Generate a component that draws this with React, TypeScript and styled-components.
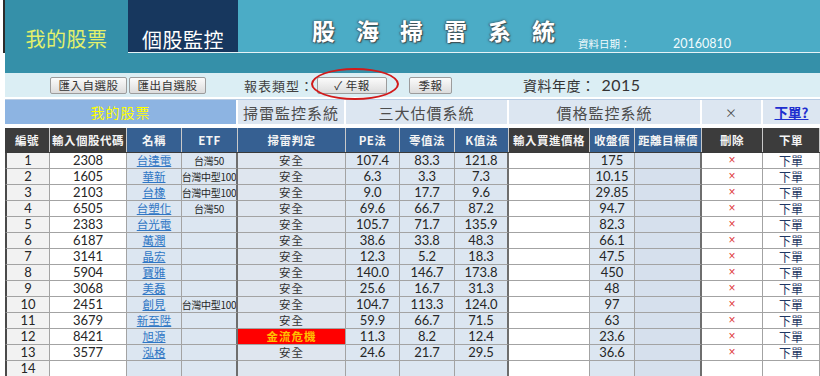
import styled, { createGlobalStyle } from "styled-components";

const COLS = "45px 77px 55px 56px 108px 54px 55px 54px 81px 45px 67px 61px 57px";

const GlobalStyle = createGlobalStyle`
  body {
    margin: 0;
    background: #ffffff;
    font-family: "Noto Sans CJK TC", "Noto Sans", sans-serif;
  }
`;

type Stock = {
  no: number;
  code: string;
  name: string;
  etf: string;
  verdict: string;
  pe: string;
  zero: string;
  k: string;
  close: string;
};

const stocks: Stock[] = [
  { no: 1, code: "2308", name: "台達電", etf: "台灣50", verdict: "安全", pe: "107.4", zero: "83.3", k: "121.8", close: "175" },
  { no: 2, code: "1605", name: "華新", etf: "台灣中型100", verdict: "安全", pe: "6.3", zero: "3.3", k: "7.3", close: "10.15" },
  { no: 3, code: "2103", name: "台橡", etf: "台灣中型100", verdict: "安全", pe: "9.0", zero: "17.7", k: "9.6", close: "29.85" },
  { no: 4, code: "6505", name: "台塑化", etf: "台灣50", verdict: "安全", pe: "69.6", zero: "66.7", k: "87.2", close: "94.7" },
  { no: 5, code: "2383", name: "台光電", etf: "", verdict: "安全", pe: "105.7", zero: "71.7", k: "135.9", close: "82.3" },
  { no: 6, code: "6187", name: "萬潤", etf: "", verdict: "安全", pe: "38.6", zero: "33.8", k: "48.3", close: "66.1" },
  { no: 7, code: "3141", name: "晶宏", etf: "", verdict: "安全", pe: "12.3", zero: "5.2", k: "18.3", close: "47.5" },
  { no: 8, code: "5904", name: "寶雅", etf: "", verdict: "安全", pe: "140.0", zero: "146.7", k: "173.8", close: "450" },
  { no: 9, code: "3068", name: "美磊", etf: "", verdict: "安全", pe: "25.6", zero: "16.7", k: "31.3", close: "48" },
  { no: 10, code: "2451", name: "創見", etf: "台灣中型100", verdict: "安全", pe: "104.7", zero: "113.3", k: "124.0", close: "97" },
  { no: 11, code: "3679", name: "新至陞", etf: "", verdict: "安全", pe: "59.9", zero: "66.7", k: "71.5", close: "63" },
  { no: 12, code: "8421", name: "旭源", etf: "", verdict: "金流危機", pe: "11.3", zero: "8.2", k: "12.4", close: "23.6" },
  { no: 13, code: "3577", name: "泓格", etf: "", verdict: "安全", pe: "24.6", zero: "21.7", k: "29.5", close: "36.6" },
];

const headers: { label: string; dark?: boolean }[] = [
  { label: "編號", dark: true },
  { label: "輸入個股代碼", dark: true },
  { label: "名稱" },
  { label: "ETF" },
  { label: "掃雷判定" },
  { label: "PE法" },
  { label: "零值法" },
  { label: "K值法" },
  { label: "輸入買進價格", dark: true },
  { label: "收盤價" },
  { label: "距離目標價" },
  { label: "刪除", dark: true },
  { label: "下單", dark: true },
];

const colBg = [
  "#f2f2f2", "#ffffff", "#dce6f1", "#dce6f1", "#dfe6ef", "#dce6f1", "#dce6f1",
  "#dce6f1", "#ffffff", "#dce6f1", "#d6e0ed", "#ffffff", "#ffffff",
];
const thickAfter = [3, 7, 10];

const TITLE = ["股", "海", "掃", "雷", "系", "統"];

export default function App() {
  const rows = [...stocks, null];
  return (
    <Page>
      <GlobalStyle />
      <TopBar>
        <ActiveTab>我的股票</ActiveTab>
        <NavTab>個股監控</NavTab>
        <TitleArea>
          <Title>
            {TITLE.map((c) => (
              <span key={c}>{c}</span>
            ))}
          </Title>
          <DateInfo>
            <DateLabel>資料日期：</DateLabel>
            <DateValue>20160810</DateValue>
          </DateInfo>
        </TitleArea>
      </TopBar>
      <Strip />
      <Toolbar>
        <ToolButton $w={77}>匯入自選股</ToolButton>
        <ToolButton $w={77} style={{ marginLeft: 2 }}>匯出自選股</ToolButton>
        <ToolLabel>報表類型：</ToolLabel>
        <Circled>
          <ToolButton $w={70}>✓ 年報</ToolButton>
          <Ellipse />
        </Circled>
        <ToolButton $w={43} style={{ marginLeft: 22 }}>季報</ToolButton>
        <YearInfo>
          資料年度：<YearValue>2015</YearValue>
        </YearInfo>
      </Toolbar>

      <GroupRow>
        <GroupCell $span={4} $main>我的股票</GroupCell>
        <GroupCell $span={1}>掃雷監控系統</GroupCell>
        <GroupCell $span={3}>三大估價系統</GroupCell>
        <GroupCell $span={3}>價格監控系統</GroupCell>
        <GroupCell $span={1}><Cross>×</Cross></GroupCell>
        <GroupCell $span={1} $last><OrderHelp>下單?</OrderHelp></GroupCell>
      </GroupRow>

      <HeadRow>
        {headers.map((h) => (
          <HeadCell key={h.label} $dark={h.dark}>{h.label}</HeadCell>
        ))}
      </HeadRow>

      <Body>
        {rows.map((s, i) => {
          const values = s
            ? [
                String(s.no), s.code, s.name, s.etf, s.verdict, s.pe, s.zero, s.k,
                "", s.close, "", "×", "下單",
              ]
            : ["14", "", "", "", "", "", "", "", "", "", "", "", ""];
          return (
            <Row key={i}>
              {values.map((v, c) => {
                const danger = c === 4 && v === "金流危機";
                return (
                  <Cell
                    key={c}
                    $bg={danger ? "#ff0000" : colBg[c]}
                    $thick={thickAfter.includes(c)}
                    $first={c === 0}
                  >
                    {c === 2 && v ? <NameLink>{v}</NameLink> : null}
                    {c === 3 && v ? <EtfText>{v}</EtfText> : null}
                    {c === 4 && v ? danger ? <DangerText>{v}</DangerText> : <CjkText>{v}</CjkText> : null}
                    {c === 11 && v ? <DelMark>{v}</DelMark> : null}
                    {c === 12 && v ? <OrderText>{v}</OrderText> : null}
                    {[0, 1, 5, 6, 7, 9].includes(c) ? v : null}
                  </Cell>
                );
              })}
            </Row>
          );
        })}
      </Body>
    </Page>
  );
}

const Page = styled.div`
  width: 820px;
  height: 376px;
  padding-left: 5px;
  box-sizing: border-box;
  overflow: hidden;
`;

const TopBar = styled.div`
  display: flex;
  height: 53px;
  box-shadow: -2px 0 0 #2b2b2b;
`;

const ActiveTab = styled.div`
  width: 123px;
  background: #3590a9;
  color: #e3f06b;
  font-size: 20px;
  line-height: 1;
  letter-spacing: 0.5px;
  display: flex;
  align-items: flex-end;
  justify-content: center;
  padding-bottom: 4px;
  box-sizing: border-box;
`;

const NavTab = styled.div`
  width: 110px;
  background: #17375e;
  border-bottom: 1px solid #e6f3f7;
  color: #ffffff;
  font-size: 20px;
  line-height: 1;
  letter-spacing: 0.5px;
  display: flex;
  align-items: flex-end;
  justify-content: center;
  padding-bottom: 2px;
  box-sizing: border-box;
`;

const TitleArea = styled.div`
  flex: 1;
  display: flex;
  background: #4bacc6;
  border-bottom: 1px solid #e6f3f7;
  padding-left: 74px;
`;

const Title = styled.div`
  display: flex;
  gap: 21px;
  margin-top: 19px;
  height: 24px;
  font-size: 23px;
  font-weight: 700;
  line-height: 1;
  color: #ffffff;
  text-shadow: 1px 1px 1px #3d4f55, -1px 0 1px #4e6a72, 0 0 3px #37545c;
`;

const DateInfo = styled.div`
  align-self: flex-end;
  display: flex;
  align-items: baseline;
  margin-left: 23px;
  margin-bottom: 1px;
  color: #f2fbfd;
`;

const DateLabel = styled.span`
  font-size: 10.5px;
  width: 95px;
`;

const DateValue = styled.span`
  font-family: Lato, "Noto Sans", sans-serif;
  font-size: 12.5px;
`;

const Strip = styled.div`
  height: 20px;
  background: #3590a9;
`;

const Toolbar = styled.div`
  display: flex;
  align-items: center;
  height: 24px;
  background: #dbeef4;
  padding-left: 45px;
`;

const ToolButton = styled.button<{ $w: number }>`
  width: ${(p) => p.$w}px;
  height: 17px;
  padding: 0;
  border: 1px solid #9c9c9c;
  border-radius: 2px;
  background: linear-gradient(#fbfbfb, #dcdcdc);
  color: #333333;
  font-family: "Noto Sans CJK TC", sans-serif;
  font-size: 11.5px;
  line-height: 15px;
  letter-spacing: 0.5px;
`;

const ToolLabel = styled.span`
  width: 73px;
  margin-left: 38px;
  font-size: 13px;
  letter-spacing: 1px;
  color: #404040;
`;

const Circled = styled.div`
  position: relative;
  display: flex;
`;

const Ellipse = styled.div`
  position: absolute;
  left: -6px;
  top: -9px;
  width: 84px;
  height: 28px;
  border: 2px solid #d21a1a;
  border-radius: 50%;
  pointer-events: none;
`;

const YearInfo = styled.span`
  margin-left: 71px;
  font-size: 14px;
  letter-spacing: 0.5px;
  color: #333333;
`;

const YearValue = styled.span`
  margin-left: 6px;
  font-family: Lato, sans-serif;
  font-size: 16px;
`;

const GroupRow = styled.div`
  display: grid;
  grid-template-columns: ${COLS};
  height: 24px;
  margin-top: 2px;
  border-top: 1px solid #b8cce4;
`;

const GroupCell = styled.div<{ $span: number; $main?: boolean; $last?: boolean }>`
  grid-column: span ${(p) => p.$span};
  display: flex;
  align-items: center;
  justify-content: center;
  margin-right: ${(p) => (p.$last ? 0 : 2)}px;
  background: ${(p) => (p.$main ? "#8db4e2" : "#dce6f1")};
  color: ${(p) => (p.$main ? "#ffff00" : "#4d4d4d")};
  font-size: ${(p) => (p.$main ? 14 : 15)}px;
  letter-spacing: 1px;
`;

const Cross = styled.span`
  font-size: 12px;
  color: #4d4d4d;
`;

const OrderHelp = styled.span`
  color: #1f2fcf;
  font-size: 13.5px;
  font-weight: 700;
  text-decoration: underline;
  letter-spacing: 0;
`;

const HeadRow = styled.div`
  display: grid;
  grid-template-columns: ${COLS};
  height: 24px;
  margin-top: 4px;
`;

const HeadCell = styled.div<{ $dark?: boolean }>`
  display: flex;
  align-items: center;
  justify-content: center;
  background: ${(p) => (p.$dark ? "#3c3c3c" : "#366092")};
  border-right: 1px solid #c9c9c9;
  color: #f4f4f4;
  font-size: 11.5px;
  font-weight: 700;
  letter-spacing: 0.5px;
  white-space: nowrap;
`;

const Body = styled.div`
  border-top: 1px solid #3a3a3a;
`;

const Row = styled.div`
  display: grid;
  grid-template-columns: ${COLS};
  height: 16px;
`;

const Cell = styled.div<{ $bg: string; $thick?: boolean; $first?: boolean }>`
  display: flex;
  align-items: center;
  justify-content: center;
  box-sizing: border-box;
  overflow: hidden;
  white-space: nowrap;
  background: ${(p) => p.$bg};
  border-bottom: 1px solid #a3a3a3;
  border-right: ${(p) => (p.$thick ? "2px solid #6e6e6e" : "1px solid #a3a3a3")};
  border-left: ${(p) => (p.$first ? "2px solid #4a4a4a" : "none")};
  font-family: Lato, "Noto Sans CJK TC", sans-serif;
  font-size: 13px;
  line-height: 15px;
  color: #262626;
`;

const NameLink = styled.span`
  font-family: "Noto Sans CJK TC", sans-serif;
  font-size: 11.5px;
  color: #2f76c4;
  text-decoration: underline;
`;

const EtfText = styled.span`
  font-family: "Noto Sans CJK TC", sans-serif;
  font-size: 10px;
  letter-spacing: -0.3px;
  color: #262626;
`;

const CjkText = styled.span`
  font-family: "Noto Sans CJK TC", sans-serif;
  font-size: 11.5px;
  letter-spacing: 1px;
  color: #333333;
`;

const DangerText = styled.span`
  font-family: "Noto Sans CJK TC", sans-serif;
  font-size: 11.5px;
  font-weight: 700;
  letter-spacing: 1px;
  color: #ffc000;
`;

const DelMark = styled.span`
  font-family: "Liberation Sans", sans-serif;
  font-size: 12px;
  color: #e0393e;
`;

const OrderText = styled.span`
  font-family: "Noto Sans CJK TC", sans-serif;
  font-size: 12px;
  color: #1f3864;
`;
